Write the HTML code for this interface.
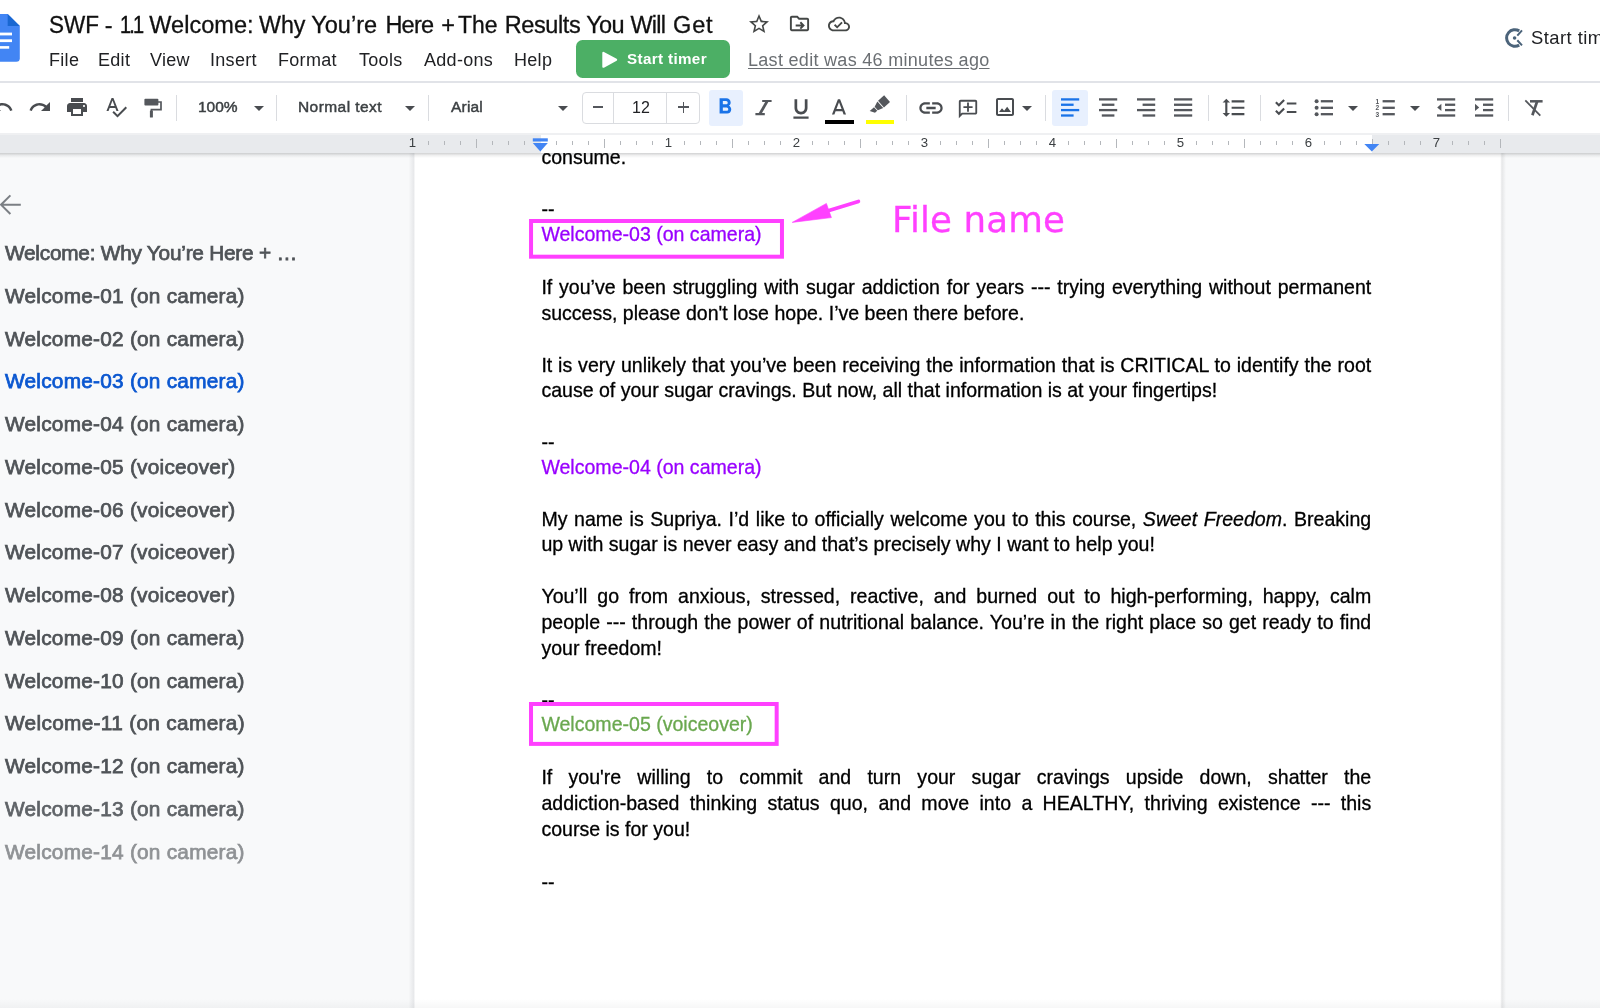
<!DOCTYPE html>
<html lang="en">
<head>
<meta charset="utf-8">
<title>SWF - 1.1 Welcome: Why You’re Here + The Results You Will Get</title>
<style>
*{box-sizing:border-box;margin:0;padding:0}
html,body{width:1600px;height:1008px;overflow:hidden;background:#fff;font-family:"Liberation Sans",sans-serif;color:#000}
body{position:relative;will-change:transform}
.abs{position:absolute}
.tw{top:9.7px;font-size:23.5px;line-height:30px;white-space:nowrap;color:#111;-webkit-text-stroke:0.3px #111}
.menu{top:48px;font-size:18px;line-height:24px;color:#202124;white-space:nowrap;letter-spacing:0.3px}
#hdrline{left:0;top:81px;width:1600px;height:2px;background:#e1e3e8}
#ruler{left:0;top:133px;width:1600px;height:19.5px;background:#e8eaed}
#rulertop{left:0;top:133px;width:1600px;height:2px;background:#eff0f2}
#rulerwhite{left:540.5px;top:135px;width:831.5px;height:17.5px;background:#fff}
#side{left:0;top:152px;width:414px;height:856px;background:#f8f9fa}
#page{left:414px;top:152px;width:1087px;height:856px;background:#fff}
#right{left:1502px;top:152px;width:98px;height:856px;background:#f8f9fa}
.ol{left:5px;font-size:20.8px;line-height:26px;color:#4f5357;white-space:nowrap;-webkit-text-stroke:0.75px #4f5357;letter-spacing:0.25px}
.doc{left:541.4px;width:829.8px;font-size:19.56px;line-height:26px;white-space:nowrap;color:#000;-webkit-text-stroke:0.3px}
.j{text-align:justify;text-align-last:justify;white-space:normal}
.pu{color:#9900ff}
.gr{color:#6aa84f}
.box{border:4px solid #ff40ff}
.tb{font-size:15.5px;line-height:24px;color:#3c4043;white-space:nowrap;-webkit-text-stroke:0.45px #3c4043}
.sep{top:95px;width:1px;height:26px;background:#dadce0}
.rn{top:136.3px;font-size:13.2px;line-height:14px;color:#3c4043;width:20px;text-align:center}
.tk{width:1.3px;background:#b4b7bb}
</style>
</head>
<body>

<svg class="abs" style="left:0;top:14px" width="22" height="50" viewBox="0 0 22 50">
  <path d="M0 0H7.7L19.8 12.1V44.3Q19.8 47.8 16.3 47.8H0Z" fill="#4285f4"/>
  <path d="M7.7 0L19.8 12.1H7.7Z" fill="#1967d2"/>
  <rect x="0" y="18.6" width="12" height="2.8" fill="#fff"/>
  <rect x="0" y="25.3" width="12" height="2.8" fill="#fff"/>
  <rect x="0" y="32.1" width="9.2" height="2.6" fill="#fff"/>
</svg>
<div class="abs tw" style="left:48.9px;transform:scaleX(0.958);transform-origin:0 0">SWF</div>
<div class="abs tw" style="left:104.7px;letter-spacing:0.00px">-</div>
<div class="abs tw" style="left:119.8px;letter-spacing:-2.1px;transform:scaleX(0.85);transform-origin:0 0;-webkit-text-stroke:0.45px #111">1.1</div>
<div class="abs tw" style="left:149.2px;letter-spacing:0.06px">Welcome:</div>
<div class="abs tw" style="left:258.9px;transform:scaleX(0.989);transform-origin:0 0">Why</div>
<div class="abs tw" style="left:311.2px;letter-spacing:0.04px">You’re</div>
<div class="abs tw" style="left:385.4px;letter-spacing:-0.77px">Here</div>
<div class="abs tw" style="left:441.2px;letter-spacing:0.00px">+</div>
<div class="abs tw" style="left:458.4px;transform:scaleX(0.975);transform-origin:0 0">The</div>
<div class="abs tw" style="left:504.7px;letter-spacing:-0.40px">Results</div>
<div class="abs tw" style="left:586.2px;letter-spacing:-0.66px">You</div>
<div class="abs tw" style="left:630.5px;letter-spacing:-0.81px">Will</div>
<div class="abs tw" style="left:673.0px;letter-spacing:0.85px">Get</div>
<div class="abs menu" style="left:49px">File</div>
<div class="abs menu" style="left:98px">Edit</div>
<div class="abs menu" style="left:150px">View</div>
<div class="abs menu" style="left:210px">Insert</div>
<div class="abs menu" style="left:278px">Format</div>
<div class="abs menu" style="left:359px">Tools</div>
<div class="abs menu" style="left:424px">Add-ons</div>
<div class="abs menu" style="left:514px">Help</div>
<svg class="abs" style="left:747px;top:11.5px" width="24" height="24" viewBox="0 0 24 24"><path d="M22 9.24l-7.19-.62L12 2 9.19 8.63 2 9.24l5.46 4.73L5.82 21 12 17.27 18.18 21l-1.63-7.03L22 9.24zM12 15.4l-3.76 2.27 1-4.28-3.32-2.88 4.38-.38L12 6.1l1.71 4.04 4.38.38-3.32 2.88 1 4.28L12 15.4z" fill="#444746"/></svg>
<svg class="abs" style="left:787.5px;top:11.5px" width="23" height="23" viewBox="0 0 24 24"><path d="M20 6h-8l-2-2H4c-1.1 0-2 .9-2 2v12c0 1.1.9 2 2 2h16c1.1 0 2-.9 2-2V8c0-1.1-.9-2-2-2zm0 12H4V6h5.17l2 2H20v10zm-7.84-1.41L13.59 18l4-4-4-4-1.41 1.41L13.76 13H8v2h5.76l-1.6 1.59z" fill="#444746"/></svg>
<svg class="abs" style="left:828px;top:13px" width="22" height="22" viewBox="0 0 24 24"><path d="M19.35 10.04C18.67 6.59 15.64 4 12 4 9.11 4 6.6 5.64 5.35 8.04 2.34 8.36 0 10.91 0 14c0 3.31 2.69 6 6 6h13c2.76 0 5-2.24 5-5 0-2.64-2.05-4.78-4.65-4.96zM19 18H6c-2.21 0-4-1.79-4-4s1.79-4 4-4h.71C7.37 7.69 9.48 6 12 6c3.04 0 5.5 2.46 5.5 5.5v.5H19c1.66 0 3 1.34 3 3s-1.34 3-3 3zm-9-3.82l-2.09-2.09L6.5 13.5 10 17l6.01-6.01-1.41-1.41z" fill="#444746"/></svg>
<div class="abs" id="timerbtn" style="left:575.8px;top:40px;width:154.2px;height:38.2px;border-radius:6.5px;background:#4caf65"></div>
<svg class="abs" style="left:600px;top:50px" width="20" height="20" viewBox="600 50 20 20"><path d="M603.4 52.9L616.1 59.8L603.4 66.7Z" fill="#fff" stroke="#fff" stroke-width="2.2" stroke-linejoin="round"/></svg>
<div class="abs" style="left:627px;top:47px;font-size:15.2px;line-height:24px;font-weight:bold;color:#fff;white-space:nowrap;letter-spacing:0.36px">Start timer</div>
<div class="abs" id="lastedit" style="left:748px;top:48px;font-size:18px;line-height:24px;color:#6b6f73;white-space:nowrap;text-decoration:underline;text-underline-offset:2px;letter-spacing:0.3px">Last edit was 46 minutes ago</div>
<svg class="abs" style="left:1503px;top:26px" width="24" height="24" viewBox="0 0 24 24" fill="none" stroke="#4b637a" stroke-linecap="butt"><path d="M16.2 4.9A8.3 8.3 0 1 0 16.2 19.1" stroke-width="3"/><path d="M14.3 9.7L19 4.4M14.3 14.3L19 19.4" stroke-width="2"/><circle cx="11.6" cy="12" r="1.8" fill="#4b637a" stroke="none"/></svg>
<div class="abs" style="left:1531px;top:26px;font-size:18.4px;line-height:24px;color:#202124;white-space:nowrap;letter-spacing:0.45px">Start timer</div>
<div id="hdrline" class="abs"></div>

<svg class="abs" style="left:-10px;top:95px" width="24" height="24" viewBox="0 0 24 24"><path d="M12.5 8c-2.65 0-5.05.99-6.9 2.6L2 7v9h9l-3.62-3.62c1.39-1.16 3.16-1.88 5.12-1.88 3.54 0 6.55 2.31 7.6 5.5l2.37-.78C21.08 11.03 17.15 8 12.5 8z" fill="#494c50"/></svg>
<svg class="abs" style="left:28px;top:95px" width="24" height="24" viewBox="0 0 24 24"><path d="M18.4 10.6C16.55 8.99 14.15 8 11.5 8c-4.65 0-8.58 3.03-9.96 7.22L3.9 16c1.05-3.19 4.05-5.5 7.6-5.5 1.95 0 3.73.72 5.12 1.88L13 16h9V7l-3.6 3.6z" fill="#494c50"/></svg>
<svg class="abs" style="left:65px;top:95px" width="24" height="24" viewBox="0 0 24 24"><path d="M19 8H5c-1.66 0-3 1.34-3 3v6h4v4h12v-4h4v-6c0-1.66-1.34-3-3-3zm-3 11H8v-5h8v5zm3-7c-.55 0-1-.45-1-1s.45-1 1-1 1 .45 1 1-.45 1-1 1zm-1-9H6v4h12V3z" fill="#494c50"/></svg>
<svg class="abs" style="left:104px;top:95px" width="24" height="24" viewBox="0 0 24 24"><path d="M12.45 16h2.09L9.43 3H7.57L2.46 16h2.09l1.12-3h5.64l1.14 3zm-6.02-5L8.5 5.48 10.57 11H6.43zm15.16.59l-8.09 8.09L9.83 16l-1.41 1.41 5.09 5.09L23 13l-1.41-1.41z" fill="#494c50"/></svg>
<svg class="abs" style="left:140px;top:95px" width="26" height="26" viewBox="140 95 26 26"><rect x="144.4" y="98.8" width="14" height="6.8" rx="1" fill="#54575c"/><path d="M158 102H161V109.6H151.4V113" fill="none" stroke="#54575c" stroke-width="1.7"/><rect x="149.9" y="110.5" width="3" height="7" rx="0.6" fill="#54575c"/></svg>
<div class="abs sep" style="left:176px"></div>
<div class="abs sep" style="left:276px"></div>
<div class="abs sep" style="left:428px"></div>
<div class="abs sep" style="left:906px"></div>
<div class="abs sep" style="left:1045px"></div>
<div class="abs sep" style="left:1208px"></div>
<div class="abs sep" style="left:1260px"></div>
<div class="abs sep" style="left:1508px"></div>
<div class="abs tb" style="left:198px;top:95px">100%</div>
<svg class="abs" style="left:247px;top:96px" width="24" height="24" viewBox="0 0 24 24"><path d="M7 10l5 5 5-5z" fill="#494c50"/></svg>
<div class="abs tb" style="left:298px;top:95px;letter-spacing:0.43px">Normal text</div>
<svg class="abs" style="left:398px;top:96px" width="24" height="24" viewBox="0 0 24 24"><path d="M7 10l5 5 5-5z" fill="#494c50"/></svg>
<div class="abs tb" style="left:451px;top:95px;letter-spacing:0.2px">Arial</div>
<svg class="abs" style="left:551px;top:96px" width="24" height="24" viewBox="0 0 24 24"><path d="M7 10l5 5 5-5z" fill="#494c50"/></svg>
<div class="abs" style="left:582px;top:92px;width:118px;height:32px;border:1px solid #dadce0;border-radius:4px"></div>
<div class="abs" style="left:613px;top:92px;width:1px;height:32px;background:#dadce0"></div>
<div class="abs" style="left:666px;top:92px;width:1px;height:32px;background:#dadce0"></div>
<div class="abs" style="left:592.5px;top:106.1px;width:10.5px;height:1.8px;background:#54575c"></div>
<div class="abs" style="left:678px;top:106.1px;width:11px;height:1.8px;background:#54575c"></div>
<div class="abs" style="left:682.6px;top:101.5px;width:1.8px;height:11px;background:#54575c"></div>
<div class="abs tb" style="left:621px;top:96px;width:40px;text-align:center;font-size:16px;color:#202124;-webkit-text-stroke:0">12</div>
<div class="abs" style="left:709px;top:90px;width:34px;height:35.6px;border-radius:3px;background:#e8f0fe"></div>
<svg class="abs" style="left:712px;top:94px" width="26" height="26" viewBox="0 0 24 24"><path d="M15.6 10.79c.97-.67 1.65-1.77 1.65-2.79 0-2.26-1.75-4-4-4H7v14h7.04c2.09 0 3.71-1.7 3.71-3.79 0-1.52-.86-2.82-2.15-3.42zM10 6.5h3c.83 0 1.5.67 1.5 1.5s-.67 1.5-1.5 1.5h-3v-3zm3.5 9H10v-3h3.5c.83 0 1.5.67 1.5 1.5s-.67 1.5-1.5 1.5z" fill="#1a73e8"/></svg>
<svg class="abs" style="left:750px;top:95px" width="26" height="26" viewBox="750 95 26 26" fill="none" stroke="#54575c"><path d="M762.2 101H771.6M755.4 114.1H764.8" stroke-width="2.1"/><path d="M767.3 101L759.8 114" stroke-width="2.7"/></svg>
<svg class="abs" style="left:787.8px;top:96px" width="26" height="26" viewBox="0 0 24 24"><path d="M12 17c3.31 0 6-2.69 6-6V3h-2.5v8c0 1.93-1.57 3.5-3.5 3.5S8.5 12.93 8.5 11V3H6v8c0 3.31 2.69 6 6 6zm-7 2v2h14v-2H5z" fill="#494c50"/></svg>
<svg class="abs" style="left:826.4px;top:95.6px" width="26" height="26" viewBox="0 0 24 24"><path d="M11 3L5.5 17h2.25l1.12-3h6.25l1.12 3h2.25L13 3h-2zm-1.38 9L12 5.67 14.38 12H9.62z" fill="#494c50"/></svg>
<div class="abs" style="left:824.5px;top:120px;width:29.5px;height:4px;background:#000"></div>
<svg class="abs" style="left:866px;top:92px" width="28" height="28" viewBox="-14 -14 28 28"><g transform="translate(-1.1,0) rotate(48)" fill="#54575c"><rect x="-4.4" y="-11" width="8.8" height="8.2"/><path d="M-4.4 -1.9H4.4L2.4 3.6H-2.4Z"/><path d="M-2.4 4.4H2.4V7.4L-2.4 10.2Z"/></g></svg>
<div class="abs" style="left:866px;top:120px;width:28px;height:4px;background:#ffff00"></div>
<svg class="abs" style="left:917px;top:93.5px" width="28" height="28" viewBox="0 0 24 24"><path d="M3.9 12c0-1.71 1.39-3.1 3.1-3.1h4V7H7c-2.76 0-5 2.24-5 5s2.24 5 5 5h4v-1.9H7c-1.71 0-3.1-1.39-3.1-3.1zM8 13h8v-2H8v2zm9-6h-4v1.9h4c1.71 0 3.1 1.39 3.1 3.1s-1.39 3.1-3.1 3.1h-4V17h4c2.76 0 5-2.24 5-5s-2.24-5-5-5z" fill="#494c50"/></svg>
<svg class="abs" style="transform:scaleX(-1);left:957.3px;top:97.6px" width="22" height="22" viewBox="0 0 24 24"><path d="M22 4c0-1.1-.9-2-2-2H4c-1.1 0-2 .9-2 2v12c0 1.1.9 2 2 2h14l4 4V4zM20 17.17L18.83 16H4V4h16v13.17zM13 5h-2v4H7v2h4v4h2v-4h4V9h-4z" fill="#494c50"/></svg>
<svg class="abs" style="left:993px;top:94.5px" width="24" height="24" viewBox="0 0 24 24"><path d="M19 5v14H5V5h14m0-2H5c-1.1 0-2 .9-2 2v14c0 1.1.9 2 2 2h14c1.1 0 2-.9 2-2V5c0-1.1-.9-2-2-2zm-4.86 8.86l-3 3.87L9 13.14 6 17h12l-3.86-5.14z" fill="#494c50"/></svg>
<svg class="abs" style="left:1015px;top:96px" width="24" height="24" viewBox="0 0 24 24"><path d="M7 10l5 5 5-5z" fill="#494c50"/></svg>
<div class="abs" style="left:1052px;top:90px;width:36px;height:35.6px;border-radius:3px;background:#e8f0fe"></div>
<svg class="abs" style="left:1059.0px;top:95px" width="24" height="26" viewBox="1059.0 95 24 26" fill="#1a73e8"><rect x="1061.0" y="98.25" width="18.2" height="2.3"/><rect x="1061.0" y="103.60" width="12.6" height="2.3"/><rect x="1061.0" y="108.95" width="18.2" height="2.3"/><rect x="1061.0" y="114.35" width="12.6" height="2.3"/></svg>
<svg class="abs" style="left:1097.0px;top:95px" width="24" height="26" viewBox="1097.0 95 24 26" fill="#54575c"><rect x="1099.0" y="98.25" width="18.2" height="2.3"/><rect x="1101.8" y="103.60" width="12.6" height="2.3"/><rect x="1099.0" y="108.95" width="18.2" height="2.3"/><rect x="1101.8" y="114.35" width="12.6" height="2.3"/></svg>
<svg class="abs" style="left:1134.6px;top:95px" width="24" height="26" viewBox="1134.6 95 24 26" fill="#54575c"><rect x="1136.6" y="98.25" width="18.2" height="2.3"/><rect x="1142.2" y="103.60" width="12.6" height="2.3"/><rect x="1136.6" y="108.95" width="18.2" height="2.3"/><rect x="1142.2" y="114.35" width="12.6" height="2.3"/></svg>
<svg class="abs" style="left:1171.8px;top:95px" width="24" height="26" viewBox="1171.8 95 24 26" fill="#54575c"><rect x="1173.8" y="98.25" width="18.2" height="2.3"/><rect x="1173.8" y="103.60" width="18.2" height="2.3"/><rect x="1173.8" y="108.95" width="18.2" height="2.3"/><rect x="1173.8" y="114.35" width="18.2" height="2.3"/></svg>
<svg class="abs" style="left:1221.25px;top:95.25px" width="25.5" height="25.5" viewBox="0 0 24 24"><path d="M6 7h2.5L5 3.5 1.5 7H4v10H1.5L5 20.5 8.5 17H6V7zm4-2v2h12V5H10zm0 14h12v-2H10v2zm0-6h12v-2H10v2z" fill="#494c50"/></svg>
<svg class="abs" style="left:1272.75px;top:95.45px" width="25.5" height="25.5" viewBox="0 0 24 24"><path d="M22 7h-9v2h9V7zm0 8h-9v2h9v-2zM5.54 11L2 7.46l1.41-1.41 2.12 2.12 4.24-4.24 1.41 1.41L5.54 11zm0 8L2 15.46l1.41-1.41 2.12 2.12 4.24-4.24 1.41 1.41L5.54 19z" fill="#494c50"/></svg>
<svg class="abs" style="left:1310px;top:95px" width="26" height="26" viewBox="1310 95 26 26" fill="#54575c"><circle cx="1316.6" cy="101.25" r="2"/><rect x="1320.8" y="100.1" width="12.2" height="2.3"/><circle cx="1316.6" cy="107.8" r="2"/><rect x="1320.8" y="106.64999999999999" width="12.2" height="2.3"/><circle cx="1316.6" cy="114.2" r="2"/><rect x="1320.8" y="113.05" width="12.2" height="2.3"/></svg>
<svg class="abs" style="left:1341px;top:96px" width="24" height="24" viewBox="0 0 24 24"><path d="M7 10l5 5 5-5z" fill="#494c50"/></svg>
<svg class="abs" style="left:1372px;top:95px" width="26" height="26" viewBox="1372 95 26 26" fill="#54575c"><rect x="1382.6" y="100.1" width="12.2" height="2.3"/><rect x="1382.6" y="106.64999999999999" width="12.2" height="2.3"/><rect x="1382.6" y="113.05" width="12.2" height="2.3"/><g font-family="Liberation Sans, sans-serif" font-size="6.6" font-weight="bold"><text x="1375.6" y="103.6">1</text><text x="1375.6" y="110.1">2</text><text x="1375.6" y="116.6">3</text></g></svg>
<svg class="abs" style="left:1403px;top:96px" width="24" height="24" viewBox="0 0 24 24"><path d="M7 10l5 5 5-5z" fill="#494c50"/></svg>
<svg class="abs" style="left:1435.4px;top:95px" width="24" height="26" viewBox="1435.4 95 24 26" fill="#54575c"><rect x="1437.4" y="98.25" width="18.2" height="2.3"/><rect x="1445.4" y="103.60" width="10.2" height="2.3"/><rect x="1445.4" y="108.95" width="10.2" height="2.3"/><rect x="1437.4" y="114.35" width="18.2" height="2.3"/><path d="M1441.8000000000002 103.8L1437.6000000000001 107.45L1441.8000000000002 111.1Z"/></svg>
<svg class="abs" style="left:1473.2px;top:95px" width="24" height="26" viewBox="1473.2 95 24 26" fill="#54575c"><rect x="1475.2" y="98.25" width="18.2" height="2.3"/><rect x="1483.2" y="103.60" width="10.2" height="2.3"/><rect x="1483.2" y="108.95" width="10.2" height="2.3"/><rect x="1475.2" y="114.35" width="18.2" height="2.3"/><path d="M1475.2 103.8L1479.4 107.45L1475.2 111.1Z"/></svg>
<svg class="abs" style="left:1520px;top:95px" width="28" height="26" viewBox="1520 95 28 26" fill="none" stroke="#54575c"><path d="M1530 101.3H1542.6" stroke-width="2.5"/><path d="M1537.2 101.3L1532.4 115.2" stroke-width="2.7"/><path d="M1525.3 100.4L1540.3 115.6" stroke-width="1.8"/></svg>
<div id="side" class="abs"></div><div id="page" class="abs"></div><div id="right" class="abs"></div>
<div class="abs" style="left:408px;top:152px;width:8px;height:856px;background:linear-gradient(to right,#f8f9fa 0,#f8f9fa 6%,#e8e9eb 69%,#fff 91%,#fff 100%)"></div>
<div class="abs" style="left:1500px;top:152px;width:7px;height:856px;background:linear-gradient(to right,#fff 0,#fff 4%,#e6e7e8 27%,#f8f9fa 86%,#f8f9fa 100%)"></div>
<div class="abs" style="left:0;top:999px;width:1600px;height:9px;background:linear-gradient(rgba(60,64,67,0),rgba(60,64,67,.045))"></div>
<svg class="abs" style="left:-2px;top:192px" width="26" height="26" viewBox="0 0 26 26" fill="none" stroke="#7b7f84" stroke-width="2" stroke-linejoin="miter"><path d="M22.8 12.7H3.6M12.4 3.4L3 12.7L12.4 22"/></svg>
<div class="abs ol" style="top:240.0px;letter-spacing:-0.23px">Welcome: Why You’re Here + …</div>
<div class="abs ol" style="top:282.8px">Welcome-01 (on camera)</div>
<div class="abs ol" style="top:325.5px">Welcome-02 (on camera)</div>
<div class="abs ol" style="top:368.2px;color:#0b57d0;-webkit-text-stroke-color:#0b57d0">Welcome-03 (on camera)</div>
<div class="abs ol" style="top:411.0px">Welcome-04 (on camera)</div>
<div class="abs ol" style="top:453.8px">Welcome-05 (voiceover)</div>
<div class="abs ol" style="top:496.5px">Welcome-06 (voiceover)</div>
<div class="abs ol" style="top:539.2px">Welcome-07 (voiceover)</div>
<div class="abs ol" style="top:582.0px">Welcome-08 (voiceover)</div>
<div class="abs ol" style="top:624.8px">Welcome-09 (on camera)</div>
<div class="abs ol" style="top:667.5px">Welcome-10 (on camera)</div>
<div class="abs ol" style="top:710.2px;letter-spacing:0.33px">Welcome-11 (on camera)</div>
<div class="abs ol" style="top:753.0px">Welcome-12 (on camera)</div>
<div class="abs ol" style="top:795.8px;color:#5f6367;-webkit-text-stroke-color:#5f6367">Welcome-13 (on camera)</div>
<div class="abs ol" style="top:838.5px;color:#8f9295;-webkit-text-stroke-color:#8f9295">Welcome-14 (on camera)</div>
<div class="abs doc " style="top:144.00px">consume.</div>
<div class="abs doc " style="top:195.80px">--</div>
<div class="abs doc pu" style="top:221.30px">Welcome-03 (on camera)</div>
<div class="abs doc j" style="top:273.90px">If you’ve been struggling with sugar addiction for years --- trying everything without permanent</div>
<div class="abs doc " style="top:299.80px">success, please don't lose hope. I’ve been there before.</div>
<div class="abs doc j" style="top:351.50px">It is very unlikely that you’ve been receiving the information that is CRITICAL to identify the root</div>
<div class="abs doc " style="top:377.40px">cause of your sugar cravings. But now, all that information is at your fingertips!</div>
<div class="abs doc " style="top:428.81px">--</div>
<div class="abs doc pu" style="top:453.70px">Welcome-04 (on camera)</div>
<div class="abs doc j" style="top:505.50px">My name is Supriya. I’d like to officially welcome you to this course, <i>Sweet Freedom</i>. Breaking</div>
<div class="abs doc " style="top:531.30px">up with sugar is never easy and that’s precisely why I want to help you!</div>
<div class="abs doc j" style="top:582.90px">You’ll go from anxious, stressed, reactive, and burned out to high-performing, happy, calm</div>
<div class="abs doc j" style="top:608.90px">people --- through the power of nutritional balance. You’re in the right place so get ready to find</div>
<div class="abs doc " style="top:635.00px">your freedom!</div>
<div class="abs doc " style="top:687.05px">--</div>
<div class="abs doc gr" style="top:711.40px">Welcome-05 (voiceover)</div>
<div class="abs doc j" style="top:764.10px">If you're willing to commit and turn your sugar cravings upside down, shatter the</div>
<div class="abs doc j" style="top:790.00px">addiction-based thinking status quo, and move into a HEALTHY, thriving existence --- this</div>
<div class="abs doc " style="top:816.20px">course is for you!</div>
<div class="abs doc " style="top:868.62px">--</div>
<svg class="abs" style="left:527.0px;top:216.7px" width="259.0" height="43.7" viewBox="527.0 216.7 259.0 43.7"><rect x="531.00" y="220.70" width="251.00" height="35.70" fill="none" stroke="#ff40ff" stroke-width="4"/></svg>
<svg class="abs" style="left:527.0px;top:700.1px" width="253.7" height="47.9" viewBox="527.0 700.1 253.7 47.9"><rect x="531.00" y="704.10" width="245.70" height="39.90" fill="none" stroke="#ff40ff" stroke-width="4"/></svg>
<svg class="abs" style="left:780px;top:190px" width="100" height="40" viewBox="780 190 100 40"><path d="M858.4 201.4L829 210.6" stroke="#ff40ff" stroke-width="3.7" stroke-linecap="round" fill="none"/><path d="M792.2 222.4L826.4 203.4L831.4 217.6Z" fill="#ff40ff" stroke="#ff40ff" stroke-width="0.6" stroke-linejoin="round"/></svg>
<div class="abs" style="left:892px;top:198.2px;font-family:'DejaVu Sans',sans-serif;font-size:35.6px;line-height:44px;color:#ff40ff;white-space:nowrap;letter-spacing:0.15px;-webkit-text-stroke:0.3px #ff40ff">File name</div>
<div id="ruler" class="abs"></div><div id="rulertop" class="abs"></div><div id="rulerwhite" class="abs"></div>
<div class="abs rn" style="left:402.3px">1</div>
<div class="abs tk" style="left:427.7px;top:140.8px;height:4.6px"></div>
<div class="abs tk" style="left:443.7px;top:140.8px;height:4.6px"></div>
<div class="abs tk" style="left:459.7px;top:140.8px;height:4.6px"></div>
<div class="abs tk" style="left:475.7px;top:139.3px;height:8.6px"></div>
<div class="abs tk" style="left:491.7px;top:140.8px;height:4.6px"></div>
<div class="abs tk" style="left:507.7px;top:140.8px;height:4.6px"></div>
<div class="abs tk" style="left:523.7px;top:140.8px;height:4.6px"></div>
<div class="abs tk" style="left:555.7px;top:140.8px;height:4.6px"></div>
<div class="abs tk" style="left:571.7px;top:140.8px;height:4.6px"></div>
<div class="abs tk" style="left:587.7px;top:140.8px;height:4.6px"></div>
<div class="abs tk" style="left:603.7px;top:139.3px;height:8.6px"></div>
<div class="abs tk" style="left:619.7px;top:140.8px;height:4.6px"></div>
<div class="abs tk" style="left:635.7px;top:140.8px;height:4.6px"></div>
<div class="abs tk" style="left:651.7px;top:140.8px;height:4.6px"></div>
<div class="abs rn" style="left:658.3px">1</div>
<div class="abs tk" style="left:683.7px;top:140.8px;height:4.6px"></div>
<div class="abs tk" style="left:699.7px;top:140.8px;height:4.6px"></div>
<div class="abs tk" style="left:715.7px;top:140.8px;height:4.6px"></div>
<div class="abs tk" style="left:731.7px;top:139.3px;height:8.6px"></div>
<div class="abs tk" style="left:747.7px;top:140.8px;height:4.6px"></div>
<div class="abs tk" style="left:763.7px;top:140.8px;height:4.6px"></div>
<div class="abs tk" style="left:779.7px;top:140.8px;height:4.6px"></div>
<div class="abs rn" style="left:786.3px">2</div>
<div class="abs tk" style="left:811.7px;top:140.8px;height:4.6px"></div>
<div class="abs tk" style="left:827.7px;top:140.8px;height:4.6px"></div>
<div class="abs tk" style="left:843.7px;top:140.8px;height:4.6px"></div>
<div class="abs tk" style="left:859.7px;top:139.3px;height:8.6px"></div>
<div class="abs tk" style="left:875.7px;top:140.8px;height:4.6px"></div>
<div class="abs tk" style="left:891.7px;top:140.8px;height:4.6px"></div>
<div class="abs tk" style="left:907.7px;top:140.8px;height:4.6px"></div>
<div class="abs rn" style="left:914.3px">3</div>
<div class="abs tk" style="left:939.7px;top:140.8px;height:4.6px"></div>
<div class="abs tk" style="left:955.7px;top:140.8px;height:4.6px"></div>
<div class="abs tk" style="left:971.7px;top:140.8px;height:4.6px"></div>
<div class="abs tk" style="left:987.7px;top:139.3px;height:8.6px"></div>
<div class="abs tk" style="left:1003.7px;top:140.8px;height:4.6px"></div>
<div class="abs tk" style="left:1019.7px;top:140.8px;height:4.6px"></div>
<div class="abs tk" style="left:1035.7px;top:140.8px;height:4.6px"></div>
<div class="abs rn" style="left:1042.3px">4</div>
<div class="abs tk" style="left:1067.7px;top:140.8px;height:4.6px"></div>
<div class="abs tk" style="left:1083.7px;top:140.8px;height:4.6px"></div>
<div class="abs tk" style="left:1099.7px;top:140.8px;height:4.6px"></div>
<div class="abs tk" style="left:1115.7px;top:139.3px;height:8.6px"></div>
<div class="abs tk" style="left:1131.7px;top:140.8px;height:4.6px"></div>
<div class="abs tk" style="left:1147.7px;top:140.8px;height:4.6px"></div>
<div class="abs tk" style="left:1163.7px;top:140.8px;height:4.6px"></div>
<div class="abs rn" style="left:1170.3px">5</div>
<div class="abs tk" style="left:1195.7px;top:140.8px;height:4.6px"></div>
<div class="abs tk" style="left:1211.7px;top:140.8px;height:4.6px"></div>
<div class="abs tk" style="left:1227.7px;top:140.8px;height:4.6px"></div>
<div class="abs tk" style="left:1243.7px;top:139.3px;height:8.6px"></div>
<div class="abs tk" style="left:1259.7px;top:140.8px;height:4.6px"></div>
<div class="abs tk" style="left:1275.7px;top:140.8px;height:4.6px"></div>
<div class="abs tk" style="left:1291.7px;top:140.8px;height:4.6px"></div>
<div class="abs rn" style="left:1298.3px">6</div>
<div class="abs tk" style="left:1323.7px;top:140.8px;height:4.6px"></div>
<div class="abs tk" style="left:1339.7px;top:140.8px;height:4.6px"></div>
<div class="abs tk" style="left:1355.7px;top:140.8px;height:4.6px"></div>
<div class="abs tk" style="left:1371.7px;top:139.3px;height:8.6px"></div>
<div class="abs tk" style="left:1387.7px;top:140.8px;height:4.6px"></div>
<div class="abs tk" style="left:1403.7px;top:140.8px;height:4.6px"></div>
<div class="abs tk" style="left:1419.7px;top:140.8px;height:4.6px"></div>
<div class="abs rn" style="left:1426.3px">7</div>
<div class="abs tk" style="left:1451.7px;top:140.8px;height:4.6px"></div>
<div class="abs tk" style="left:1467.7px;top:140.8px;height:4.6px"></div>
<div class="abs tk" style="left:1483.7px;top:140.8px;height:4.6px"></div>
<div class="abs tk" style="left:1499.7px;top:139.3px;height:8.6px"></div>
<svg class="abs" style="left:531px;top:136px" width="20" height="18" viewBox="531 136 20 18" fill="#4285f4"><rect x="532.8" y="138.3" width="15" height="3.2"/><path d="M532.8 143H547.8L540.3 151.5Z"/></svg>
<svg class="abs" style="left:1362px;top:136px" width="20" height="18" viewBox="1362 136 20 18" fill="#4285f4"><path d="M1364.3 144H1379.3L1371.8 151.5Z"/></svg>
<div class="abs" style="left:0;top:152.5px;width:1600px;height:5px;background:linear-gradient(rgba(60,64,67,.24),rgba(60,64,67,.08) 50%,rgba(60,64,67,0))"></div>
</body>
</html>
